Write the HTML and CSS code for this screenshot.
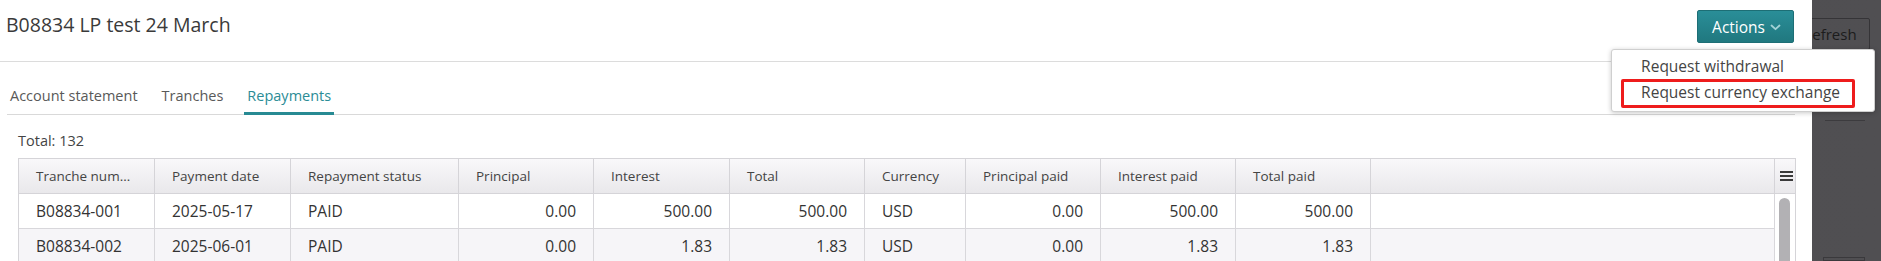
FILE: index.html
```html
<!DOCTYPE html>
<html lang="en">
<head>
<meta charset="utf-8">
<title>B08834 LP test 24 March</title>
<link rel="stylesheet" href="styles.css">
</head>
<body>
  <div class="panel">
    <div class="header">
      <h1 class="title">B08834 LP test 24 March</h1>
      <div class="actions">
        <button class="actions-btn">Actions
          <svg class="chev" width="11" height="7" viewBox="0 0 11 7"><polyline points="1.5,1.5 5.5,5.2 9.5,1.5" fill="none" stroke="#a3d2d6" stroke-width="1.8" stroke-linecap="round" stroke-linejoin="round"/></svg>
        </button>
        <div class="menu">
          <div class="menu-item">Request withdrawal</div>
          <div class="menu-item highlight">Request currency exchange</div>
        </div>
      </div>
    </div>
    <div class="tabs">
      <div class="tab">Account statement</div>
      <div class="tab">Tranches</div>
      <div class="tab active">Repayments</div>
    </div>
    <div class="content">
      <div class="total">Total: 132</div>
      <div class="grid">
        <div class="thead">
          <div class="th">Tranche number</div>
          <div class="th">Payment date</div>
          <div class="th">Repayment status</div>
          <div class="th">Principal</div>
          <div class="th">Interest</div>
          <div class="th">Total</div>
          <div class="th">Currency</div>
          <div class="th">Principal paid</div>
          <div class="th">Interest paid</div>
          <div class="th">Total paid</div>
          <div class="th"></div>
          <div class="th menu-cell">
            <span class="hamb"><i></i><i></i><i></i></span>
          </div>
        </div>
        <div class="tbody">
          <div class="rows">
            <div class="tr">
              <div class="td">B08834-001</div>
              <div class="td">2025-05-17</div>
              <div class="td">PAID</div>
              <div class="td num">0.00</div>
              <div class="td num">500.00</div>
              <div class="td num">500.00</div>
              <div class="td">USD</div>
              <div class="td num">0.00</div>
              <div class="td num">500.00</div>
              <div class="td num">500.00</div>
              <div class="td"></div>
            </div>
            <div class="tr alt">
              <div class="td">B08834-002</div>
              <div class="td">2025-06-01</div>
              <div class="td">PAID</div>
              <div class="td num">0.00</div>
              <div class="td num">1.83</div>
              <div class="td num">1.83</div>
              <div class="td">USD</div>
              <div class="td num">0.00</div>
              <div class="td num">1.83</div>
              <div class="td num">1.83</div>
              <div class="td"></div>
            </div>
          </div>
          <div class="vscroll"><div class="thumb"></div></div>
        </div>
      </div>
    </div>
  </div>
  <div class="backdrop">
    <div class="bg-btn">Refresh</div>
    <div class="bg-line"></div>
    <div class="bg-box"></div>
  </div>
</body>
</html>
```
FILE: styles.css
```css
* { box-sizing: border-box; }
html, body { margin: 0; height: 100%; }
body {
  display: flex;
  overflow: hidden;
  background: linear-gradient(90deg, #38373a 0, #464548 14px, #4c4b4e 40px, #504f52 100%);
  font-family: "Open Sans", "Liberation Sans", sans-serif;
  color: #333;
}
.panel {
  width: 1812px;
  flex: none;
  background: #fff;
  position: relative;
  z-index: 2;
}
.header {
  height: 62px;
  border-bottom: 1px solid #dcdcdc;
  display: flex;
  justify-content: space-between;
  align-items: flex-start;
  padding: 10px 18px 0 6px;
}
.title {
  margin: 0;
  font-size: 19.5px;
  font-weight: 400;
  line-height: 29px;
  color: #3a3a3a;
}
.actions { position: relative; }
.actions-btn {
  height: 33px;
  display: flex;
  align-items: center;
  gap: 5px;
  padding: 0 12px 0 14px;
  font-family: inherit;
  font-size: 15.5px;
  color: #fff;
  background: linear-gradient(#2a8e98, #20787f);
  border: 1px solid #1d6e75;
  border-radius: 2px;
}
.chev { display: block; margin-top: 1px; }
.menu {
  position: absolute;
  left: -86px;
  top: 39px;
  width: 264px;
  background: #fff;
  border: 1px solid #cfcfcf;
  border-radius: 3px;
  box-shadow: 0 1px 5px rgba(0,0,0,0.22);
  padding: 6px 19px 3px 9px;
  z-index: 5;
}
.menu-item {
  font-size: 15.5px;
  line-height: 21px;
  color: #444;
  padding-left: 20px;
  margin-bottom: 2px;
  white-space: nowrap;
}
.menu-item.highlight {
  margin-bottom: 0;
  border: 3px solid #ee1c1c;
  border-radius: 2px;
  padding: 0 10px 2px 17px;
}
.tabs {
  margin: 0 17px 0 7px;
  padding-top: 24px;
  display: flex;
  gap: 18px;
  border-bottom: 1px solid #d9d9d9;
}
.tab {
  padding: 0 3px 6px;
  line-height: 20px;
  font-size: 14.5px;
  color: #595959;
  border-bottom: 3px solid transparent;
  margin-bottom: -1px;
}
.tab.active {
  color: #2b8c96;
  border-bottom-color: #278a93;
}
.content { padding: 16px 16px 0 18px; }
.total {
  font-size: 14.5px;
  line-height: 20px;
  color: #444;
  margin-bottom: 7px;
}
.grid {
  width: 1778px;
  border: 1px solid #d5d4d8;
  border-bottom: 0;
}
.thead, .tr {
  display: grid;
  grid-template-columns: 136px 136px 168px 135px 136px 135px 101px 135px 135px 135px 404px;
}
.thead {
  grid-template-columns: 136px 136px 168px 135px 136px 135px 101px 135px 135px 135px 404px 20px;
  height: 35px;
  border-bottom: 1px solid #d5d4d8;
  background: linear-gradient(#f9f8fa, #e9e8eb);
}
.th {
  border-right: 1px solid #d5d4d8;
  padding: 0 17px;
  line-height: 34px;
  font-size: 13.5px;
  color: #444;
  white-space: nowrap;
  overflow: hidden;
  text-overflow: ellipsis;
}
.th.menu-cell {
  border-right: 0;
  padding: 0;
  display: flex;
  align-items: center;
  justify-content: center;
}
.hamb {
  display: flex;
  flex-direction: column;
  gap: 2px;
  width: 13px;
  margin-left: 3px;
}
.hamb i {
  display: block;
  height: 2px;
  background: #3a3a3a;
}
.tbody { display: flex; }
.rows { flex: 1; }
.tr {
  height: 35px;
  border-bottom: 1px solid #d8d7db;
  background: #fff;
}
.tr.alt { background: #f6f5f8; }
.td {
  border-right: 1px solid #d8d7db;
  padding: 0 17px;
  line-height: 34px;
  font-size: 15.5px;
  color: #333;
  white-space: nowrap;
  overflow: hidden;
}
.td.num { text-align: right; }
.vscroll {
  width: 20px;
  flex: none;
  background: #fff;
  padding: 4px 4px 0 4px;
}
.thumb {
  width: 11px;
  height: 120px;
  border-radius: 6px;
  background: #b2b1b4;
}
.backdrop {
  flex: 1;
  position: relative;
  z-index: 1;
  display: flex;
  flex-direction: column;
  align-items: flex-start;
}
.bg-btn {
  margin: 18px 0 0 -22px;
  height: 32px;
  padding: 0 12px;
  line-height: 30px;
  font-size: 15px;
  color: #1c1c1c;
  border: 1px solid #353437;
  border-radius: 2px;
}
.bg-line {
  margin: 70px 0 0 13px;
  width: 40px;
  border-top: 1px solid #3c3b3e;
}
.bg-box {
  margin: 136px 0 0 11px;
  width: 42px;
  height: 20px;
  border: 1px solid #3a393c;
}
```
